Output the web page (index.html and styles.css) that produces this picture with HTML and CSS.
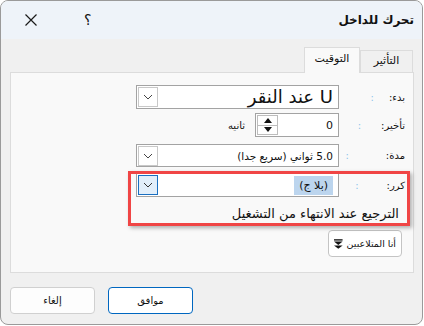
FILE: index.html
```html
<!DOCTYPE html>
<html lang="ar">
<head>
    <meta charset="UTF-8">
    <title>تحرك للداخل</title>
    <link rel="stylesheet" href="styles.css">
</head>
<body>
    <div class="window">
        <div class="titlebar">
            <span class="tb-close">
                <svg width="12" height="12" viewBox="0 0 12 12"><path d="M0.5 0.5 L11.5 11.5 M11.5 0.5 L0.5 11.5" stroke="#1a1a1a" stroke-width="1.2" fill="none"/></svg>
            </span>
            <span class="tb-help">؟</span>
            <span class="title">تحرك للداخل</span>
        </div>

        <div class="content" dir="rtl">
            <div class="tabs">
                <div class="tab">التأثير</div>
                <div class="tab active">التوقيت</div>
            </div>

            <div class="panel">
                <!-- start -->
                <div class="row row-start">
                    <div class="label"><span>بدء:</span><span class="colon colon-start">:</span></div>
                    <div class="combo">
                        <span class="value big">U عند النقر</span>
                        <span class="drop">
                            <svg width="10" height="6" viewBox="0 0 10 6"><polyline points="1,1 5,5 9,1" stroke="#444" stroke-width="1" fill="none"/></svg>
                        </span>
                    </div>
                </div>

                <!-- delay -->
                <div class="row row-delay">
                    <div class="label"><span>تأخير:</span><span class="colon colon-delay">:</span></div>
                    <div class="spin">
                        <span class="value">0</span>
                        <span class="arrows">
                            <span class="arrow"><svg width="8" height="5" viewBox="0 0 8 5"><polygon points="0,5 8,5 4,0" fill="#111"/></svg></span>
                            <span class="arrow"><svg width="8" height="5" viewBox="0 0 8 5"><polygon points="0,0 8,0 4,5" fill="#111"/></svg></span>
                        </span>
                    </div>
                    <span class="unit">ثانيه</span>
                </div>

                <!-- duration -->
                <div class="row row-duration">
                    <div class="label"><span>مدة:</span><span class="colon colon-duration">:</span></div>
                    <div class="combo">
                        <span class="value small">5.0 ثواني (سريع جدا)</span>
                        <span class="drop">
                            <svg width="10" height="6" viewBox="0 0 10 6"><polyline points="1,1 5,5 9,1" stroke="#444" stroke-width="1" fill="none"/></svg>
                        </span>
                    </div>
                </div>

                <!-- repeat -->
                <div class="row row-repeat">
                    <div class="label"><span>كرر:</span><span class="colon colon-repeat">:</span></div>
                    <div class="combo">
                        <span class="value"><span class="selected">(بلا ج)</span></span>
                        <span class="drop focus">
                            <svg width="10" height="6" viewBox="0 0 10 6"><polyline points="1,1 5,5 9,1" stroke="#333" stroke-width="1" fill="none"/></svg>
                        </span>
                    </div>
                </div>

                <div class="rewind">الترجيع عند الانتهاء من التشغيل</div>

                <button class="triggers">
                    <span>أنا المتلاعبين</span>
                    <svg width="9" height="10" viewBox="0 0 9 10"><rect x="0" y="0" width="9" height="1.4" fill="#111"/><polygon points="0,2.5 9,2.5 4.5,6" fill="#111"/><polygon points="0,6.5 9,6.5 4.5,10" fill="#111"/></svg>
                </button>
            </div>

            <div class="footer">
                <button class="btn primary">موافق</button>
                <button class="btn">إلغاء</button>
            </div>
        </div>

        <!-- annotation box drawn over the dialog -->
        <div class="callout"></div>
    </div>
</body>
</html>
```

FILE: styles.css
```css
body {
    margin: 0;
    background-color: #ffffff;
    font-family: 'DejaVu Sans', sans-serif;
    color: #111;
}

.window {
    position: relative;
    box-sizing: border-box;
    width: 423px;
    height: 325px;
    border: 1px solid #9a9a9a;
    border-radius: 8px;
    overflow: hidden;
    background-color: #f0f0f0;
}

.titlebar {
    display: flex;
    align-items: center;
    height: 38px;
    background-color: #eef3f9;
}

.tb-close {
    display: flex;
    margin-left: 24px;
}

.tb-help {
    margin-left: 47px;
    font-size: 14px;
}

.title {
    margin-left: auto;
    margin-right: 8px;
    font-size: 12px;
    font-weight: bold;
}

.content {
    padding: 8px 8px 0 9px;
}

.tabs {
    display: flex;
    align-items: flex-end;
    height: 25px;
    padding-right: 1px;
}

.tab {
    box-sizing: border-box;
    height: 22px;
    width: 53px;
    font-size: 11px;
    text-align: center;
    line-height: 20px;
    border: 1px solid #dcdcdc;
    border-bottom: none;
    background-color: #f0f0f0;
}

.tab.active {
    position: relative;
    width: 56px;
    height: 26px;
    margin-bottom: -1px;
    line-height: 22px;
    background-color: #f9f9f9;
    z-index: 1;
}

.panel {
    box-sizing: border-box;
    height: 201px;
    border: 1px solid #dcdcdc;
    background-color: #f9f9f9;
    padding-top: 12px;
}

.row {
    display: flex;
    align-items: center;
    height: 24px;
}

.row-delay { margin-top: 4px; }
.row-duration { margin-top: 7px; height: 23px; }
.row-repeat { margin-top: 6px; }

.label {
    box-sizing: border-box;
    display: flex;
    align-items: center;
    width: 74px;
    padding-right: 8px;
    font-size: 10px;
}

.colon {
    color: #8cc4ea;
}

.colon-start { margin-right: 15px; }
.colon-delay { margin-right: 20px; }
.colon-duration { margin-right: 37px; }
.colon-repeat { margin-right: 28px; }

.combo, .spin {
    box-sizing: border-box;
    display: flex;
    align-items: center;
    height: 100%;
    width: 203px;
    border: 1px solid #a3a3a3;
    background-color: #ffffff;
    padding: 1px;
}

.value {
    padding-right: 4px;
    font-size: 11px;
    white-space: nowrap;
}

.value.small {
    font-size: 10.5px;
}

.value.big {
    font-size: 18px;
    line-height: 20px;
}

.selected {
    display: inline-block;
    padding: 3px 5px;
    background-color: #bcd5ee;
}

.drop {
    box-sizing: border-box;
    display: flex;
    align-items: center;
    justify-content: center;
    width: 20px;
    height: 20px;
    margin-right: auto;
    border: 1px solid #c8c8c8;
}

.drop.focus {
    border-color: #1a6fc0;
    background-color: #e1eefa;
}

.spin {
    width: 84px;
}

.arrows {
    display: flex;
    flex-direction: column;
    margin-right: auto;
    width: 21px;
    height: 100%;
}

.arrow {
    flex: 1;
    display: flex;
    align-items: center;
    justify-content: center;
    border: 1px solid #bdbdbd;
}

.arrow + .arrow {
    border-top: none;
}

.unit {
    margin-right: 10px;
    font-size: 10px;
}

.rewind {
    margin-top: 6px;
    padding-right: 14px;
    height: 22px;
    line-height: 22px;
    font-size: 13px;
}

.triggers {
    display: flex;
    align-items: center;
    gap: 4px;
    box-sizing: border-box;
    margin: 5px 11px 0 0;
    height: 27px;
    width: 74px;
    padding: 0 5px;
    border: 1px solid #c4c4c4;
    border-radius: 4px;
    background-color: #ffffff;
    font-family: inherit;
    font-size: 9.5px;
    white-space: nowrap;
    color: #111;
    direction: rtl;
}

.footer {
    display: flex;
    justify-content: flex-end;
    gap: 13px;
    margin-top: 14px;
}

.btn {
    box-sizing: border-box;
    width: 85px;
    height: 27px;
    border: 1px solid #d0d0d0;
    border-radius: 4px;
    background-color: #fdfdfd;
    font-family: inherit;
    font-size: 10px;
    color: #111;
}

.btn.primary {
    border-color: #0067c0;
    background-color: #ffffff;
}

.callout {
    position: absolute;
    left: 127px;
    top: 170px;
    width: 282px;
    height: 55px;
    box-sizing: border-box;
    border: 3px solid #f04545;
    box-shadow: 2px 2px 4px rgba(0, 0, 0, 0.3);
}
```
